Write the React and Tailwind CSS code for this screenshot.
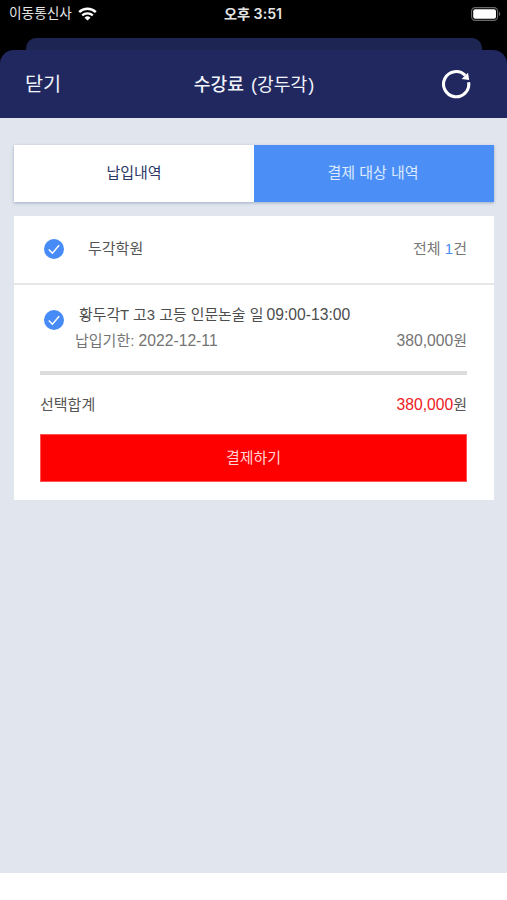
import { useState } from "react";

const payments = [
  {
    id: 1,
    title: "황두각T 고3 고등 인문논술 일",
    time: "09:00-13:00",
    due: "2022-12-11",
    amount: 380000,
  },
];

function WifiIcon() {
  return (
    <svg width="19" height="14" viewBox="0 0 19 14" fill="none">
      <path d="M1.2 5.2a12 12 0 0 1 16.6 0" stroke="#fff" strokeWidth="2.5" />
      <path d="M4.2 8.4a7.7 7.7 0 0 1 10.6 0" stroke="#fff" strokeWidth="2.3" />
      <path d="M9.5 13.6 6.5 10.7a4.3 4.3 0 0 1 6 0z" fill="#fff" />
    </svg>
  );
}

function BatteryIcon() {
  return (
    <svg width="30" height="14" viewBox="0 0 30 14" fill="none">
      <rect x="0.6" y="0.6" width="26" height="12.8" rx="3.6" stroke="#6b6b6b" strokeWidth="1.1" />
      <rect x="2.2" y="2.2" width="22.8" height="9.6" rx="2" fill="#fff" />
      <path d="M28 4.8c1.6.5 1.6 3.9 0 4.4z" fill="#6b6b6b" />
    </svg>
  );
}

function RefreshIcon() {
  return (
    <svg width="30" height="30" viewBox="0 0 30 30" fill="none">
      <path
        d="M27.6 13.2A12.6 12.6 0 1 1 24.2 6.4"
        stroke="#fff"
        strokeWidth="3.1"
      />
      <path d="M27 3.8 28.2 10.9 20.6 10z" fill="#fff" />
    </svg>
  );
}

function CheckCircle({ checked, onClick }) {
  return (
    <button onClick={onClick} className="h-5 w-5 flex-shrink-0">
      <svg width="20" height="20" viewBox="0 0 20 20" fill="none">
        <circle cx="10" cy="10" r="10" fill={checked ? "#478bf7" : "#c9ced8"} />
        <path d="m4.8 10.4 3.6 3.8 6.8-8" stroke="#fff" strokeWidth="1.5" />
      </svg>
    </button>
  );
}

function App() {
  const [checked, setChecked] = useState(true);
  const total = checked ? payments.reduce((sum, p) => sum + p.amount, 0) : 0;

  return (
    <div className="flex h-[900px] w-full flex-col bg-white font-['Liberation_Sans','Noto_Sans_CJK_KR',sans-serif] text-[15px] text-[#555]">
      <div className="flex-shrink-0 bg-black">
        {/* Status bar */}
        <div className="grid h-[38px] grid-cols-3 pt-1 pr-1.5 pl-[9px] text-[#e4e4e4]">
          <div className="flex h-[19px] items-center gap-1.5">
            <span className="text-[13.7px] leading-[19px] whitespace-nowrap">이동통신사</span>
            <WifiIcon />
          </div>
          <div className="h-[19px] pr-1 text-center font-['Inter','Noto_Sans_CJK_KR',sans-serif] text-[14.2px] leading-[20px] font-semibold">
            오후 3:51
          </div>
          <div className="flex h-[19px] items-center justify-end">
            <BatteryIcon />
          </div>
        </div>

        {/* Sheet behind */}
        <div className="mr-[25px] ml-[26px] h-3 rounded-t-[10px] bg-[#1d2553]" />

        {/* Header */}
        <div className="flex h-[68px] items-center justify-between rounded-t-[14px] bg-[#20285f] pr-9 pl-[25px] text-[#f1f3fb]">
          <button className="w-[74px] text-left text-[19.7px] leading-7">닫기</button>
          <h1 className="pt-px text-[18.2px] leading-7">
            <span className="font-medium">수강료</span>
            <span className="ml-[7px]">(</span>강두각<span className="ml-px">)</span>
          </h1>
          <button className="flex w-[62px] justify-end">
            <RefreshIcon />
          </button>
        </div>
      </div>

      <main className="h-[755px] flex-shrink-0 bg-[#e1e6ee] px-3.5 pt-[27px]">
        {/* Tabs */}
        <div className="mr-[-1px] grid h-[57px] grid-cols-2 shadow-[0_1px_3px_rgba(80,100,150,0.45)]">
          <button className="bg-white text-[#2b3766]">납입내역</button>
          <button className="bg-[#4b8ef6] pr-0.5 text-[#dcebff]">결제 대상 내역</button>
        </div>

        <section className="mt-3.5 mr-[-1px] h-[284px] bg-white">
          <div className="flex h-[69px] items-center border-b-2 border-[#e6e7e9] pr-[27px] pb-px pl-[30px]">
            <CheckCircle checked={checked} onClick={() => setChecked(!checked)} />
            <span className="ml-6 flex-1 pt-px">두각학원</span>
            <span className="pt-px text-[#777]">
              전체 <span className="text-[#4b8ef6]">{payments.length}</span>건
            </span>
          </div>

          <div className="pr-[27px] pl-[26px]">
            {payments.map((p) => (
              <div key={p.id} className="flex h-[90px] border-b-4 border-[#dcdcdc] pt-[17px] pl-1">
                <div className="pt-2">
                  <CheckCircle checked={checked} onClick={() => setChecked(!checked)} />
                </div>
                <div className="ml-[11px] flex-1 whitespace-nowrap">
                  <p className="pl-1 text-[14.9px] leading-[26px] text-[#4d4d4d]">
                    {p.title} <span className="-ml-px text-[15.7px]">{p.time}</span>
                  </p>
                  <div className="flex justify-between leading-[26px] text-[#747474]">
                    <span>
                      납입기한: <span className="text-[15.7px]">{p.due}</span>
                    </span>
                    <span>
                      <span className="text-[15.7px]">{p.amount.toLocaleString()}</span>원
                    </span>
                  </div>
                </div>
              </div>
            ))}

            {/* Total */}
            <div className="flex h-[59px] items-center justify-between pt-px">
              <span>선택합계</span>
              <span>
                <span className="text-[15.7px] text-[#ed2024]">{total.toLocaleString()}</span>원
              </span>
            </div>
            <button className="h-12 w-full border border-[#ff5252] bg-[#ff0000] text-[#ffd4d4]">
              결제하기
            </button>
          </div>
        </section>
      </main>
    </div>
  );
}

export default App;
